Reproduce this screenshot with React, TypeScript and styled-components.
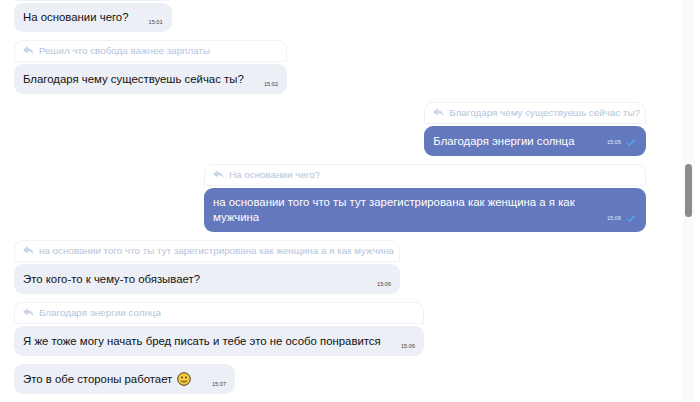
import React from "react";
import styled, { createGlobalStyle } from "styled-components";

const Global = createGlobalStyle`
  html, body { margin: 0; padding: 0; background: #fff; overflow: hidden; }
  body { font-family: "Liberation Sans", Arial, sans-serif; }
`;
const Page = styled.div`
  width: 700px; height: 402px; display: flex; overflow: hidden; background: #fff;
`;
const Feed = styled.div`
  width: 683px; height: 402px; flex: none; overflow: hidden; box-sizing: border-box;
  padding: 0 37px 0 14px; display: flex; flex-direction: column;
`;
const Track = styled.div`
  width: 12px; height: 402px; flex: none; background: #fafafa; box-sizing: border-box; padding: 164px 3px 0 2px;
`;
const Thumb = styled.div`
  width: 7px; height: 53px; border-radius: 4px; background: #8b8b8b;
`;
const Sliver = styled.div`
  width: 156px; height: 1px; flex: none; background: #f0f2f9; margin-bottom: 2px;
`;
const Group = styled.div<{ $mine?: boolean; $w?: number }>`
  display: flex; flex-direction: column; gap: 2px; margin-bottom: 8px; flex: none;
  align-self: ${(p) => (p.$mine ? "flex-end" : "flex-start")};
  ${(p) => (p.$w ? `width: ${p.$w}px;` : "")}
`;
const Reply = styled.div`
  height: 22px; box-sizing: border-box; border: 1px solid #f0f2f9; border-radius: 9px 9px 0 0;
  display: flex; align-items: center; padding: 0 5px 2px 8px; gap: 5px;
  font-size: 9.84px; color: #b3c5db; white-space: nowrap;
`;
const Bubble = styled.div<{ $mine?: boolean; $short?: boolean }>`
  box-sizing: border-box; min-height: ${(p) => (p.$short ? 29 : 30)}px; border-radius: 9px;
  padding: 7px 9px; font-size: 11.38px; line-height: 15px;
  background: ${(p) => (p.$mine ? "#6478bd" : "#edeff6")};
  color: ${(p) => (p.$mine ? "#fff" : "#111")};
  display: flex; justify-content: space-between; align-items: flex-end;
`;
const Body = styled.div`
  max-width: 400px;
`;
const Time = styled.span<{ $mine?: boolean }>`
  font-size: 5.6px; line-height: 8px; flex: none; color: ${(p) => (p.$mine ? "#e4e8f6" : "#444")};
  display: inline-flex; align-items: center; gap: 5px;
  margin: 0 ${(p) => (p.$mine ? 1 : 0)}px ${(p) => (p.$mine ? 3 : -1)}px ${(p) => (p.$mine ? 31 : 20)}px;
`;
const Arrow = () => (
  <svg width="11" height="9" viewBox="0 0 11 9" fill="#c9d5e6">
    <path d="M4.6 0 0 3.9 4.6 7.8V5.4c2.8-.2 4.6.6 6 3.4C10.4 4.9 8.4 2.6 4.6 2.3z" />
  </svg>
);
const Check = () => (
  <svg width="10" height="7" viewBox="0 0 10 7" fill="none" stroke="#4ea3ea" strokeWidth="1.2">
    <path d="M.5 3.5 3 6 8 1M3.6 5.6 4 6 9.5 .8" />
  </svg>
);
const Smile = () => (
  <svg width="14" height="14" viewBox="0 0 14 14" style={{ verticalAlign: "-3px", marginLeft: 1 }}>
    <circle cx="7" cy="7" r="6.3" fill="#f6c945" stroke="#4a3b10" strokeWidth="1" />
    <circle cx="5" cy="5.3" r="0.9" fill="#3a2c08" />
    <circle cx="9" cy="5.3" r="0.9" fill="#3a2c08" />
    <path d="M3.8 8.4c1.4 2 5 2 6.4 0" fill="none" stroke="#3a2c08" strokeWidth="0.9" />
  </svg>
);

type Msg = { text: React.ReactNode; time: string; reply?: string; mine?: boolean; w?: number; short?: boolean };
const msgs: Msg[] = [
  { text: "На основании чего?", time: "15:01", short: true },
  { text: "Благодаря чему существуешь сейчас ты?", time: "15:02", reply: "Решил что свобода важнее зарплаты", w: 273 },
  { text: "Благодаря энергии солнца", time: "15:05", reply: "Благодаря чему существуешь сейчас ты?", mine: true },
  { text: "на основании того что ты тут зарегистрирована как женщина а я как мужчина", time: "15:06", reply: "На основании чего?", mine: true, w: 442 },
  { text: "Это кого-то к чему-то обязывает?", time: "15:06", reply: "на основании того что ты тут зарегистрирована как женщина а я как мужчина" },
  { text: "Я же тоже могу начать бред писать и тебе это не особо понравится", time: "15:06", reply: "Благодаря энергии солнца", w: 410 },
  { text: <>Это в обе стороны работает <Smile /></>, time: "15:07", w: 221 },
];

export default function App() {
  return (
    <Page>
      <Global />
      <Feed>
        <Sliver />
        {msgs.map((m) => (
          <Group key={m.time + String(m.reply)} $mine={m.mine} $w={m.w}>
            {m.reply && (
              <Reply>
                <Arrow />
                {m.reply}
              </Reply>
            )}
            <Bubble $mine={m.mine} $short={m.short}>
              <Body>{m.text}</Body>
              <Time $mine={m.mine}>
                {m.time}
                {m.mine && <Check />}
              </Time>
            </Bubble>
          </Group>
        ))}
        <Group $mine $w={436}>
          <Reply />
        </Group>
      </Feed>
      <Track>
        <Thumb />
      </Track>
    </Page>
  );
}
